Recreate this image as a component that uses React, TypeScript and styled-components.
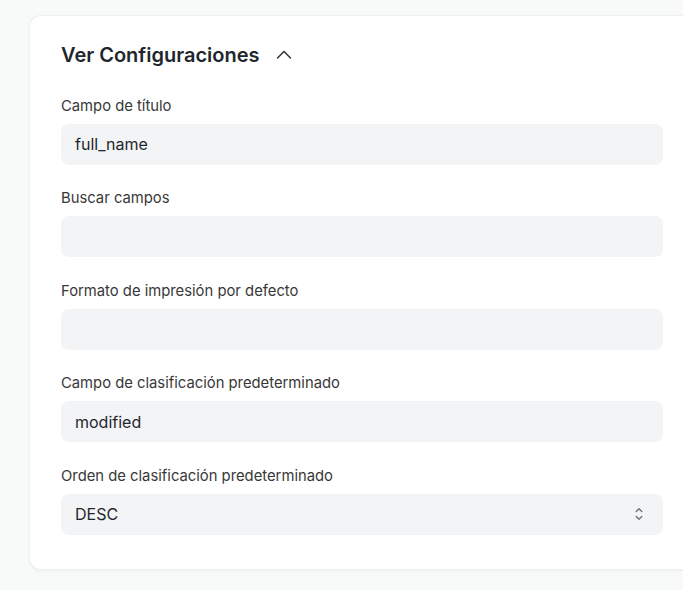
import React from "react";
import styled, { createGlobalStyle } from "styled-components";

const Global = createGlobalStyle`
  html, body { margin: 0; padding: 0; background: #f8f9f9; }
  body { font-family: Inter, "Noto Sans", sans-serif; color: #1f272e; }
`;

const Page = styled.div`
  padding: 15px 0 0 29px;
  height: 590px;
  box-sizing: border-box;
  overflow: hidden;
`;

const Card = styled.section`
  background: #fff;
  border: 1px solid #edeff1;
  border-right: none;
  border-radius: 12px 0 0 12px;
  box-shadow: 0 1px 3px rgba(0, 0, 0, 0.05);
  padding: 24.5px 20px 34px 31px;
`;

const Header = styled.div`
  display: flex;
  align-items: center;
  gap: 16px;
  margin-bottom: 27px;
`;

const Title = styled.h2`
  margin: 0;
  font-size: 20px;
  line-height: 28px;
  font-weight: 600;
  color: #1f272e;
`;

const Fields = styled.div`
  display: flex;
  flex-direction: column;
  gap: 23.5px;
`;

const Field = styled.label`
  display: flex;
  flex-direction: column;
  gap: 8px;
`;

const Label = styled.span`
  font-size: 14.8px;
  line-height: 20px;
  color: #383838;
`;

const Box = styled.div`
  position: relative;
  height: 41px;
  box-sizing: border-box;
  background: #f3f4f5;
  border-radius: 8px;
  padding: 0 14px;
  display: flex;
  align-items: center;
  justify-content: space-between;
  font-size: 16px;
  color: #1f272e;
`;

const Arrows = styled.svg`
  width: 10px;
  height: 16px;
  margin-right: 5px;
`;

const fields: { label: string; value: string; select?: boolean }[] = [
  { label: "Campo de título", value: "full_name" },
  { label: "Buscar campos", value: "" },
  { label: "Formato de impresión por defecto", value: "" },
  { label: "Campo de clasificación predeterminado", value: "modified" },
  { label: "Orden de clasificación predeterminado", value: "DESC", select: true },
];

export default function App() {
  return (
    <>
      <Global />
      <Page>
        <Card>
          <Header>
            <Title>Ver Configuraciones</Title>
            <svg width="16" height="16" viewBox="0 0 16 16" fill="none">
              <path d="M1.5 11 L8 4.5 L14.5 11" stroke="#333" strokeWidth="1.5" strokeLinecap="round" strokeLinejoin="round" />
            </svg>
          </Header>
          <Fields>
            {fields.map((f) => (
              <Field key={f.label}>
                <Label>{f.label}</Label>
                <Box>
                  <span>{f.value}</span>
                  {f.select && (
                    <Arrows viewBox="0 0 10 16" fill="none">
                      <path d="M2.2 5.5 L5 2.7 L7.8 5.5" stroke="#6b7079" strokeWidth="1.3" strokeLinecap="round" strokeLinejoin="round" />
                      <path d="M2.2 10.5 L5 13.3 L7.8 10.5" stroke="#6b7079" strokeWidth="1.3" strokeLinecap="round" strokeLinejoin="round" />
                    </Arrows>
                  )}
                </Box>
              </Field>
            ))}
          </Fields>
        </Card>
      </Page>
    </>
  );
}
